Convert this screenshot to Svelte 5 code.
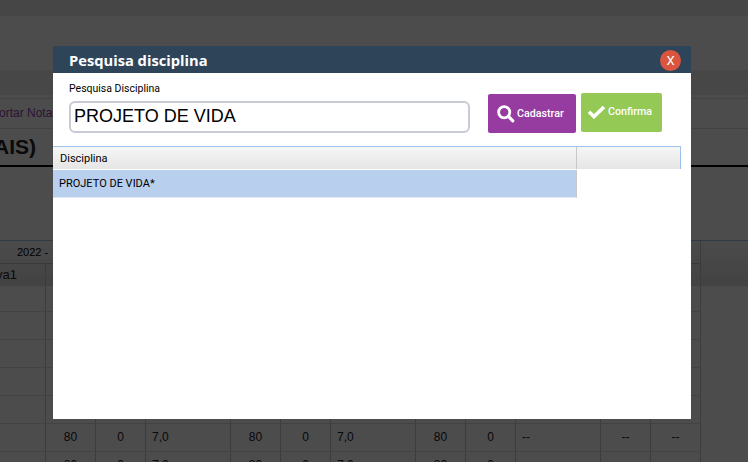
<script lang="ts">
  const emptyCells = Array(12).fill('');
  const rows = [
    ['', '80', '0', '7,0', '80', '0', '7,0', '80', '0', '--', '--', '--'],
    ['', '80', '0', '7,0', '80', '0', '7,0', '80', '0', '', '', '']
  ];
  const emptyRows = [0, 1, 2, 3, 4];
</script>

<div class="page">
  <div class="topbar"></div>
  <div class="subbar"></div>
  <div class="band"></div>
  <div class="links">ortar Notas</div>
  <h1>AIS)</h1>

  <div class="grid">
    <div class="gridhead">
      <div class="year">2022 -</div>
      <div class="row head">
        {#each emptyCells as _, i}
          <div class="cell" class:label={i === 0}>{i === 0 ? 'va1' : ''}</div>
        {/each}
      </div>
    </div>
    {#each emptyRows as _}
      <div class="row">
        {#each emptyCells as value}
          <div class="cell">{value}</div>
        {/each}
      </div>
    {/each}
    {#each rows as row}
      <div class="row">
        {#each row as value, i}
          <div class="cell" class:left={value === '7,0' || i === 9}>{value}</div>
        {/each}
      </div>
    {/each}
  </div>
</div>

<div class="overlay"></div>

<div class="modal">
  <header>
    <span class="title">Pesquisa disciplina</span>
    <button type="button" class="close">X</button>
  </header>
  <div class="body">
    <div class="search">
      <label for="disc">Pesquisa Disciplina</label>
      <input id="disc" type="text" value="PROJETO DE VIDA" />
    </div>
    <button type="button" class="btn purple">
      <svg width="18" height="18" viewBox="0 0 18 18" fill="none" stroke="currentColor" aria-hidden="true">
        <circle cx="7.2" cy="7.2" r="5.6" stroke-width="2.8" />
        <line x1="11.4" y1="11.4" x2="15.8" y2="15.8" stroke-width="3.2" stroke-linecap="round" />
      </svg>
      Cadastrar
    </button>
    <button type="button" class="btn green">
      <svg width="19" height="14" viewBox="0 0 19 14" fill="none" stroke="currentColor" aria-hidden="true">
        <path d="M2 6.8 L7 11.6 L17 2" stroke-width="3.6" />
      </svg>
      Confirma
    </button>
  </div>
  <div class="table">
    <div class="thead">
      <div class="th main">Disciplina</div>
      <div class="th"></div>
    </div>
    <div class="tr">PROJETO DE VIDA*</div>
  </div>
</div>

<style>
  :global(body) {
    margin: 0;
    overflow: hidden;
    background: #fff;
    font-family: "Liberation Sans", Arial, sans-serif;
  }
  .page {
    width: 748px;
    height: 462px;
    overflow: hidden;
    color: #000;
  }
  .topbar { height: 16px; background: #ececec; }
  .subbar { height: 54px; background: #fff; }
  .band { height: 25px; background: #eeeeee; }
  .links {
    height: 31px;
    margin-top: 3px;
    border-top: 1px solid #e2e2e2;
    border-bottom: 1px solid #e2e2e2;
    box-sizing: border-box;
    font-size: 12px;
    line-height: 29px;
    color: #9a3fb0;
    text-indent: -1px;
  }
  h1 {
    margin: 0 0 73px;
    height: 38px;
    box-sizing: border-box;
    border-bottom: 2px solid #000;
    font-size: 21px;
    line-height: 35px;
    font-weight: bold;
    color: #222;
    text-indent: -6px;
  }
  .grid { font-size: 12px; }
  .gridhead {
    height: 46px;
    box-sizing: border-box;
    border-top: 1px solid #9dc3ec;
    background: linear-gradient(#fbfbfb, #dedede);
  }
  .year {
    width: 701px;
    height: 23px;
    box-sizing: border-box;
    border-right: 1px solid #c8c8c8;
    border-bottom: 1px solid #c0c0c0;
    font-size: 11px;
    line-height: 22px;
    padding-left: 17px;
  }
  .row {
    display: grid;
    grid-template-columns: 46px 50px 50px 85px 50px 50px 85px 50px 50px 85px 50px 50px;
    width: 701px;
    height: 28px;
    border-bottom: 1px solid #e2e2e2;
    box-sizing: border-box;
  }
  .row.head {
    height: 22px;
    border-bottom: none;
  }
  .gridhead + .row { height: 26px; }
  .cell {
    border-right: 1px solid #c8c8c8;
    text-align: center;
    line-height: 27px;
    color: #222;
  }
  .cell.label {
    text-align: left;
    font-size: 13px;
    line-height: 22px;
    text-indent: -4px;
  }
  .cell.left { text-align: left; padding-left: 6px; }
  .overlay {
    position: fixed;
    inset: 0;
    background: rgba(0, 0, 0, 0.7);
  }
  .modal {
    position: fixed;
    left: 53px;
    top: 46px;
    width: 638px;
    height: 373px;
    background: #fff;
  }
  header {
    height: 27px;
    background: #2e4559;
    display: flex;
    align-items: center;
    justify-content: space-between;
    padding: 0 10px 0 16px;
  }
  .title {
    font-family: "Open Sans", sans-serif;
    font-weight: 700;
    font-size: 14.7px;
    color: #fff;
  }
  .close {
    width: 21px;
    height: 21px;
    margin-top: 1px;
    padding: 0;
    border: none;
    border-radius: 50%;
    background: #d9553f;
    color: #fff;
    font-family: Roboto, sans-serif;
    font-size: 13px;
  }
  .body {
    display: flex;
    align-items: flex-start;
    padding: 20px 29px 0 16px;
    height: 53px;
  }
  .search {
    display: flex;
    flex-direction: column;
    width: 401px;
    margin-right: 18px;
    margin-top: -11px;
  }
  label {
    font-family: Roboto, sans-serif;
    font-size: 10.5px;
    line-height: 14px;
    color: #000;
    margin-bottom: 5px;
  }
  input {
    box-sizing: border-box;
    width: 401px;
    height: 32px;
    border: 2px solid #c8cbd6;
    border-radius: 6px;
    padding: 0 3px 2px;
    font-family: "Liberation Sans", Arial, sans-serif;
    font-size: 18px;
    color: #000;
    outline: none;
  }
  .btn {
    display: flex;
    align-items: center;
    gap: 2px;
    height: 39px;
    border: none;
    border-radius: 2px;
    color: #fff;
    font-family: Roboto, sans-serif;
    font-size: 10.7px;
    font-weight: 500;
  }
  .purple { width: 88px; margin-top: 1px; padding: 0 0 0 9px; background: #963ba0; }
  .green { width: 81px; margin-left: 5px; padding: 0 0 2px 6px; background: #93c954; }
  .table { width: 628px; }
  .thead {
    display: flex;
    height: 22px;
    border-top: 1px solid #9dc3ec;
    border-right: 1px solid #9dc3ec;
  }
  .th {
    flex: 1;
    background: linear-gradient(#f6f6f6, #e6e5e5);
  }
  .th.main {
    flex: none;
    width: 516px;
    border-right: 1px solid #c8c8c8;
    font-family: Roboto, sans-serif;
    font-size: 11px;
    line-height: 24px;
    padding-left: 7px;
  }
  .tr {
    width: 524px;
    height: 28px;
    margin-top: 1px;
    box-sizing: border-box;
    background: #b8cfee;
    border-right: 1px solid #c8c8c8;
    border-bottom: 1px solid #dfe7f3;
    padding-left: 6px;
    font-family: Roboto, sans-serif;
    font-size: 11px;
    line-height: 28px;
    color: #000;
  }
</style>
